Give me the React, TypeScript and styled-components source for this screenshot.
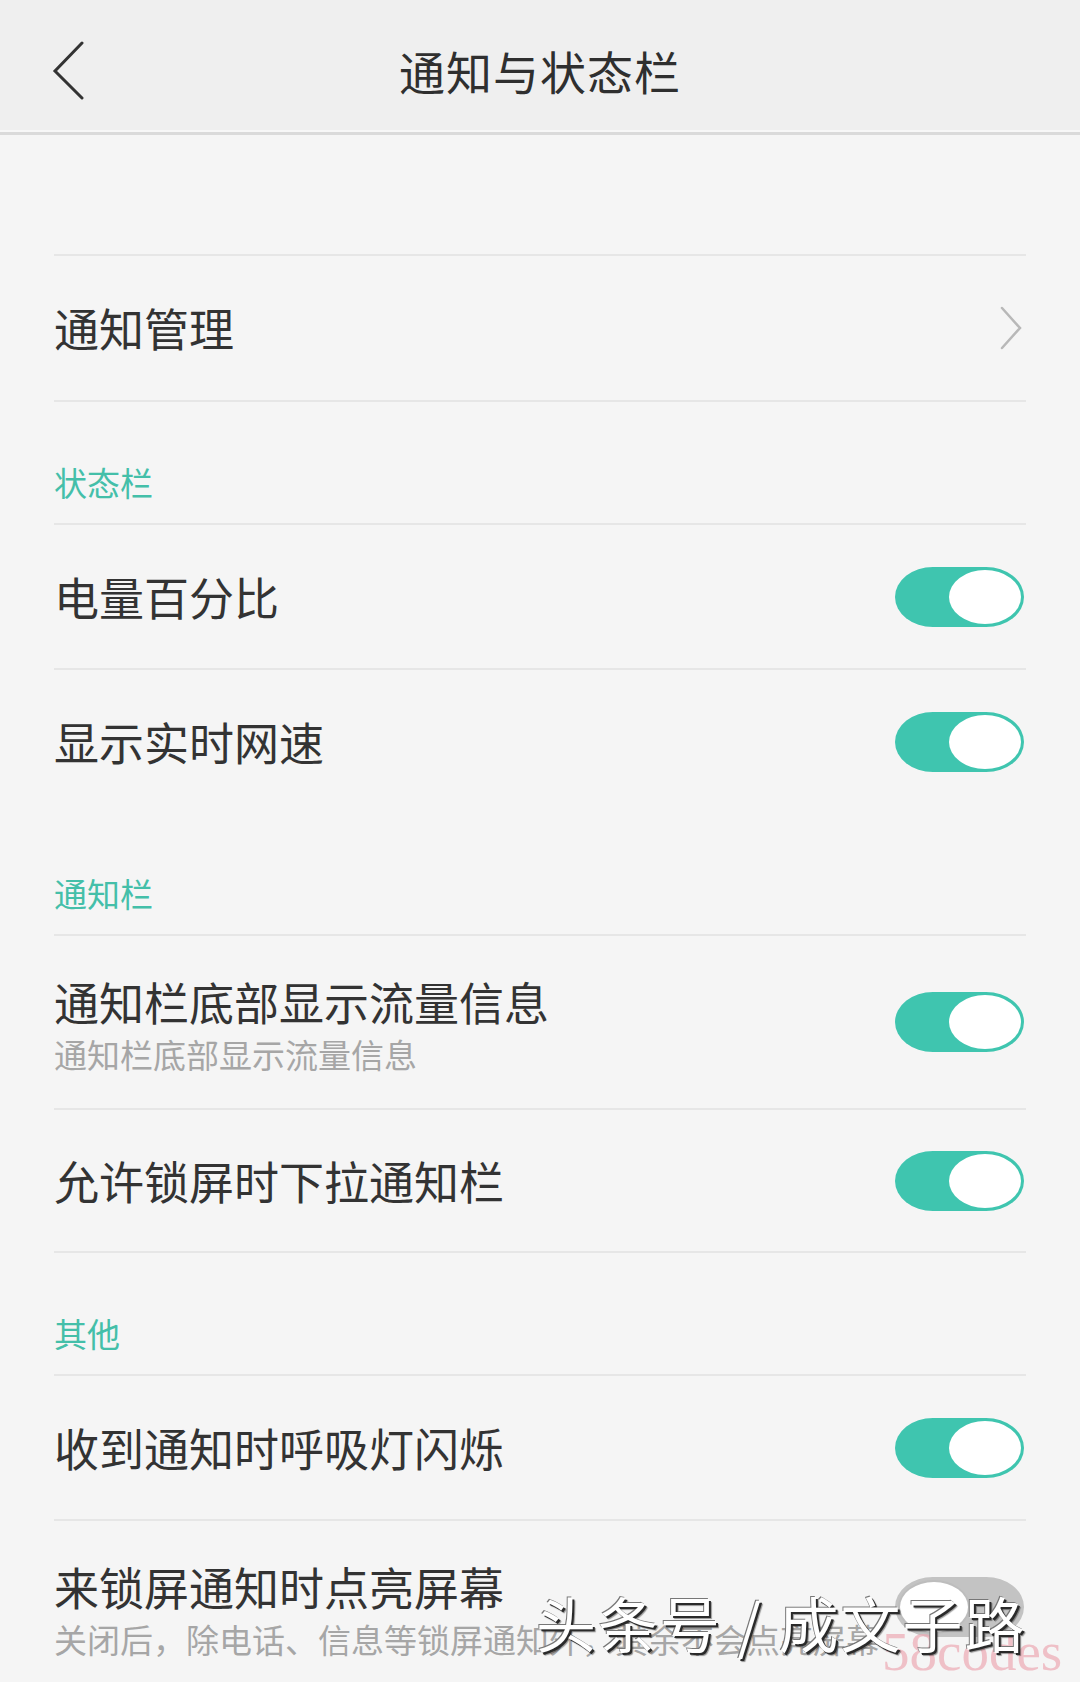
import styled, { createGlobalStyle } from "styled-components";

const GlobalStyle = createGlobalStyle`
  html, body {
    margin: 0;
    padding: 0;
    background: #f5f5f5;
  }
  * {
    box-sizing: border-box;
  }
`;

const Page = styled.div`
  position: relative;
  width: 1080px;
  height: 1682px;
  overflow: hidden;
  background: #f5f5f5;
  font-family: "Noto Sans CJK SC", "Noto Sans", sans-serif;
  color: #333333;
`;

const Header = styled.header`
  display: grid;
  grid-template-columns: 120px 1fr 120px;
  align-items: center;
  height: 135px;
  background: #efefef;
  border-bottom: 3px solid #dadada;
  box-shadow: inset 0 -2px 0 #f7f7f7;
`;

const BackButton = styled.div`
  display: flex;
  align-items: center;
  padding-left: 52px;
  padding-top: 10px;
`;

const Title = styled.h1`
  margin: 0;
  text-align: center;
  font-size: 46px;
  font-weight: 400;
  letter-spacing: 1px;
  color: #2f2f2f;
  padding-top: 8px;
`;

const List = styled.main`
  padding: 119px 54px 0 54px;
`;

const Row = styled.div<{ $tall?: boolean; $closed?: boolean }>`
  display: flex;
  align-items: center;
  justify-content: space-between;
  height: ${(p) => (p.$tall ? 174 : 145)}px;
  border-top: 2px solid #e6e6e6;
  border-bottom: ${(p) => (p.$closed ? "2px solid #e6e6e6" : "none")};
  padding-right: 2px;
`;

const LinkRow = styled(Row)`
  height: 148px;
`;

const TextBlock = styled.div`
  display: flex;
  flex-direction: column;
  gap: 6px;
  padding-top: 6px;
`;

const Label = styled.div`
  font-size: 45px;
  line-height: 52px;
  font-weight: 400;
  color: #333333;
`;

const Hint = styled.div`
  font-size: 33px;
  line-height: 40px;
  color: #a6a6a6;
  white-space: nowrap;
`;

const SectionTitle = styled.div`
  display: flex;
  align-items: flex-end;
  height: 121px;
  padding-bottom: 24px;
  font-size: 33px;
  line-height: 34px;
  color: #44bfa9;
`;

const Track = styled.div<{ $on: boolean }>`
  display: flex;
  justify-content: ${(p) => (p.$on ? "flex-end" : "flex-start")};
  align-items: center;
  width: 129px;
  height: 60px;
  padding: 3px;
  border-radius: 38px / 30px;
  background: ${(p) => (p.$on ? "#3fc5af" : "#c3c3c3")};
  flex-shrink: 0;
`;

const Thumb = styled.div<{ $on: boolean }>`
  width: 72px;
  height: 54px;
  border-radius: 50%;
  background: #ffffff;
  border: ${(p) => (p.$on ? "none" : "2px solid #bdbdbd")};
`;

const Watermark = styled.div`
  position: absolute;
  left: 536px;
  top: 1582px;
  font-size: 60px;
  line-height: 80px;
  color: #ffffff;
  letter-spacing: 2px;
  text-shadow: 2px 2px 0 #2a2a2a, -1px -1px 0 #777777, 3px 3px 1px rgba(0, 0, 0, 0.4);
  white-space: nowrap;
`;

const SiteMark = styled.div`
  position: absolute;
  left: 882px;
  top: 1624px;
  font-family: "Liberation Serif", serif;
  font-size: 55px;
  line-height: 55px;
  color: rgba(236, 170, 180, 0.7);
`;

function Toggle({ on }: { on: boolean }) {
  return (
    <Track $on={on}>
      <Thumb $on={on} />
    </Track>
  );
}

function BackIcon() {
  return (
    <svg width="34" height="60" viewBox="0 0 34 60">
      <polyline
        points="30,2 3,30 30,57"
        fill="none"
        stroke="#333333"
        strokeWidth="3"
        strokeLinecap="round"
        strokeLinejoin="miter"
      />
    </svg>
  );
}

function ChevronRight() {
  return (
    <svg width="26" height="46" viewBox="0 0 26 46">
      <polyline
        points="4,3 22,23 4,43"
        fill="none"
        stroke="#b8b8b8"
        strokeWidth="2.5"
        strokeLinecap="round"
      />
    </svg>
  );
}

export default function App() {
  return (
    <Page>
      <GlobalStyle />
      <Header>
        <BackButton>
          <BackIcon />
        </BackButton>
        <Title>通知与状态栏</Title>
        <div />
      </Header>
      <List>
        <LinkRow $closed>
          <Label>通知管理</Label>
          <ChevronRight />
        </LinkRow>

        <SectionTitle>状态栏</SectionTitle>
        <Row>
          <Label>电量百分比</Label>
          <Toggle on />
        </Row>
        <Row>
          <Label>显示实时网速</Label>
          <Toggle on />
        </Row>

        <SectionTitle>通知栏</SectionTitle>
        <Row $tall>
          <TextBlock>
            <Label>通知栏底部显示流量信息</Label>
            <Hint>通知栏底部显示流量信息</Hint>
          </TextBlock>
          <Toggle on />
        </Row>
        <Row $closed>
          <Label>允许锁屏时下拉通知栏</Label>
          <Toggle on />
        </Row>

        <SectionTitle>其他</SectionTitle>
        <Row>
          <Label>收到通知时呼吸灯闪烁</Label>
          <Toggle on />
        </Row>
        <Row $tall>
          <TextBlock>
            <Label>来锁屏通知时点亮屏幕</Label>
            <Hint>关闭后，除电话、信息等锁屏通知外，其余不会点亮屏幕</Hint>
          </TextBlock>
          <Toggle on={false} />
        </Row>
      </List>
      <SiteMark>58codes</SiteMark>
      <Watermark>头条号 / 成文子路</Watermark>
    </Page>
  );
}
